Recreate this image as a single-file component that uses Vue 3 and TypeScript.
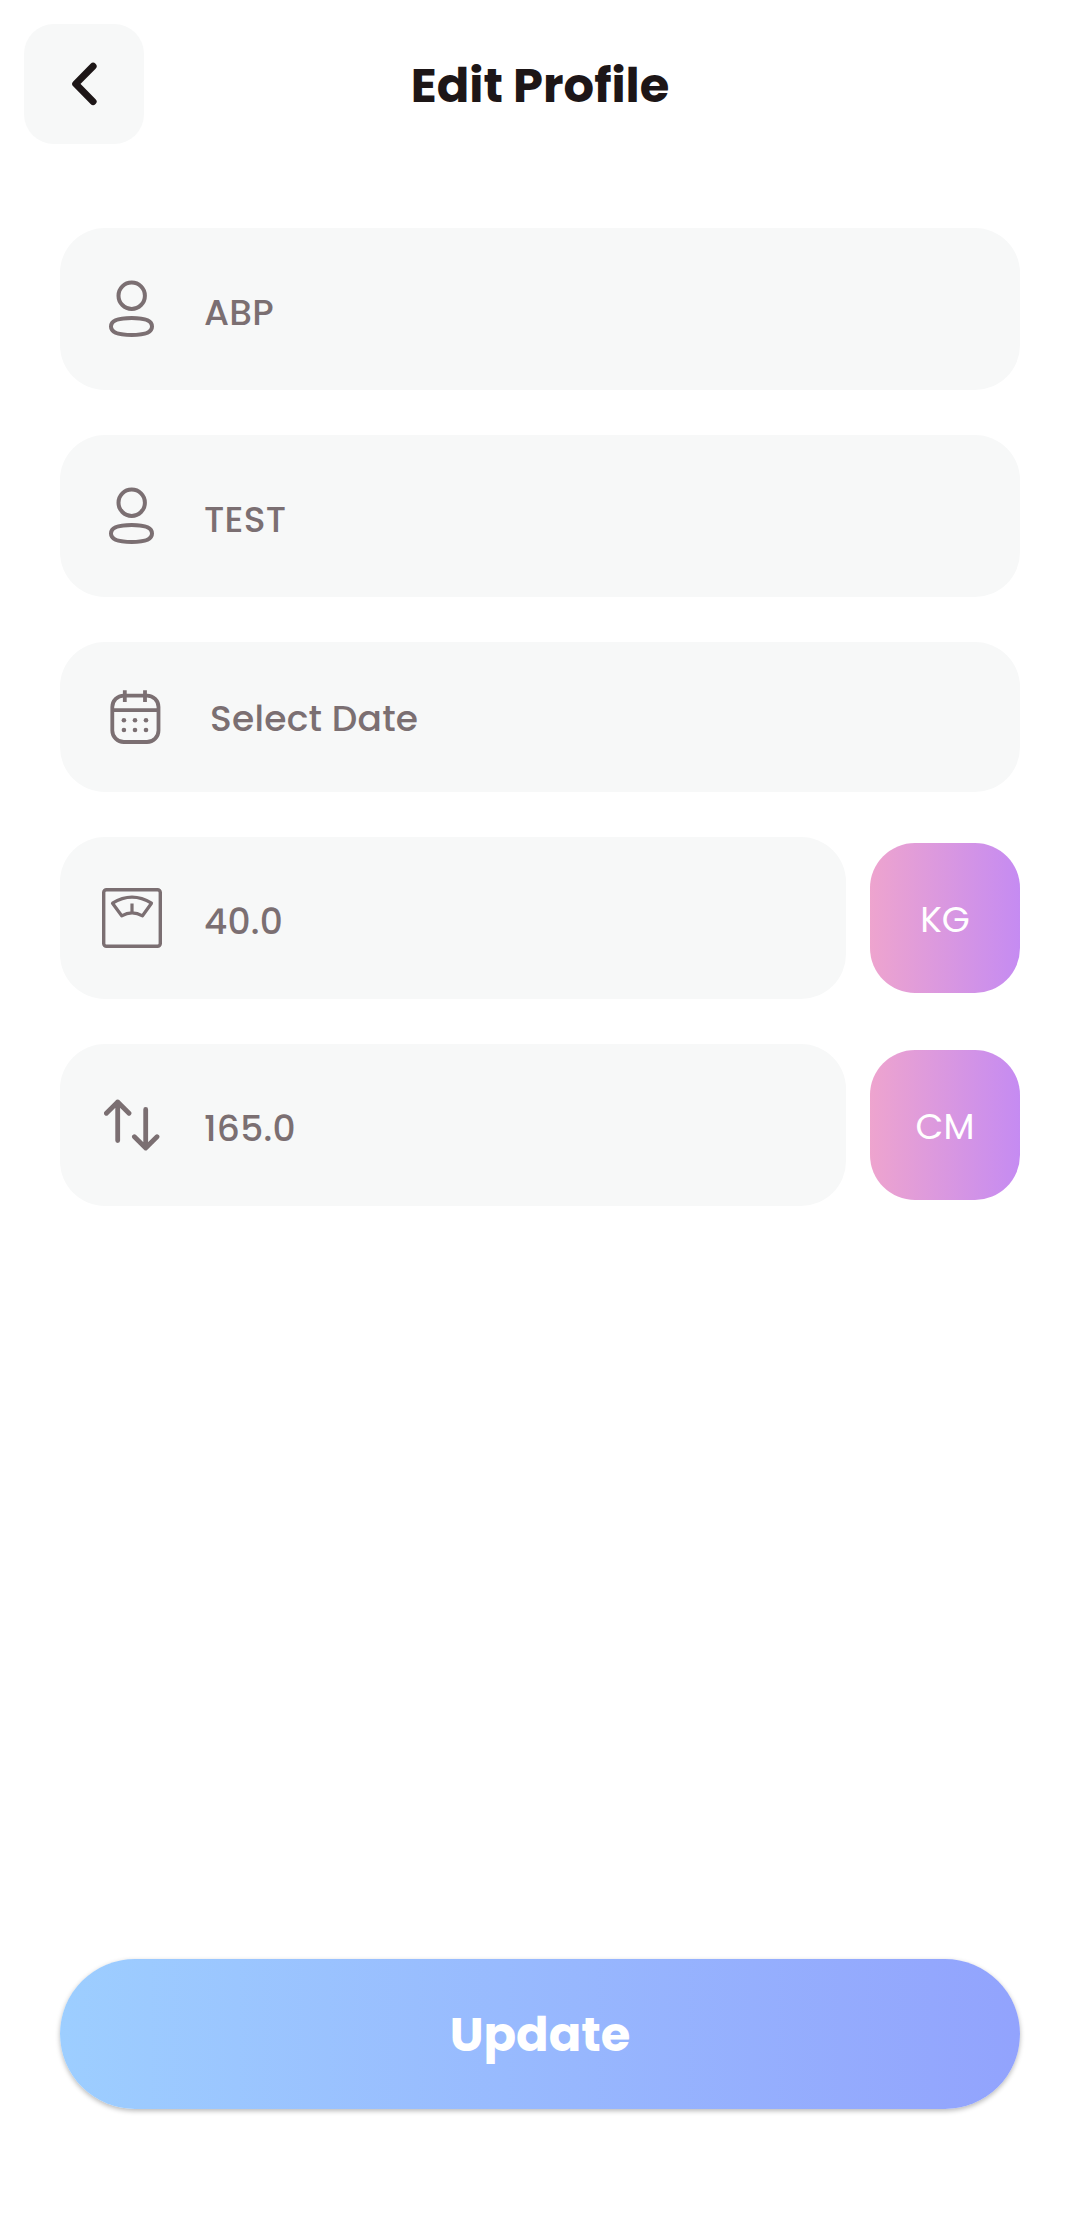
<script setup lang="ts">
type IconName = 'person' | 'calendar' | 'scale' | 'swap'

interface Field {
  id: string
  icon: IconName
  text: string
  unit?: string
}

const fields: Field[] = [
  { id: 'first', icon: 'person', text: 'ABP' },
  { id: 'last', icon: 'person', text: 'TEST' },
  { id: 'date', icon: 'calendar', text: 'Select Date' },
  { id: 'weight', icon: 'scale', text: '40.0', unit: 'KG' },
  { id: 'height', icon: 'swap', text: '165.0', unit: 'CM' },
]
</script>

<template>
  <main class="screen">
    <header class="bar">
      <button class="back" aria-label="Back">
        <svg width="120" height="120" viewBox="0 0 120 120" fill="none">
          <path d="M69.1 42.200 51.700 59.900l17.400 17.700" stroke="#1d1617" stroke-width="7" stroke-linecap="round" stroke-linejoin="round" />
        </svg>
      </button>
      <h1 class="title">Edit Profile</h1>
    </header>

    <form class="form" @submit.prevent>
      <div v-for="f in fields" :key="f.id" class="row">
        <div class="field" :class="f.id">
          <svg class="icon" width="60" height="60" viewBox="0 0 60 60" fill="none" stroke="#7b6f72">
            <g v-if="f.icon === 'person'" stroke-width="4">
              <circle cx="29.700" cy="16.700" r="13.200" />
              <path d="M29.700 39.100C40 39.100 50 40.300 50 47.500S40 56 29.700 56 9 54.700 9 47.500s10.400-8.400 20.700-8.400Z" />
            </g>
            <g v-else-if="f.icon === 'calendar'" stroke-width="3.800">
              <rect x="10.300" y="8.600" width="46.200" height="46.400" rx="11.500" />
              <path d="M10.300 23.200h46.200M22.800 3.300v11.700M43 3.300v11.700" />
              <g fill="#7b6f72" stroke="none">
                <template v-for="y in [33.2, 43]" :key="y">
                  <circle v-for="x in [21.9, 33, 44]" :key="x" :cx="x" :cy="y" r="2.300" />
                </template>
              </g>
            </g>
            <g v-else-if="f.icon === 'scale'" stroke-linejoin="round">
              <rect x="1.700" y="1.700" width="56.600" height="56.600" rx="2.800" stroke-width="3.400" />
              <path d="M10.500 15.200Q30 3 49.500 15.200L40.500 27.800Q30 22 19.700 27.800ZM30 15.500v9" stroke-width="3.200" />
            </g>
            <g v-else stroke-width="4.800" stroke-linecap="round" stroke-linejoin="round">
              <path d="M15.700 45.500V7M4.400 18.200 15.700 7l11.300 11.200M43.700 14.500V53M32.400 41.800 43.700 53l11.300-11.200" />
            </g>
          </svg>
          <span class="value">{{ f.text }}</span>
        </div>
        <button v-if="f.unit" class="unit">{{ f.unit }}</button>
      </div>
    </form>

    <button class="update">Update</button>
  </main>
</template>

<style>
body {
  margin: 0;
  background: #fff;
}
</style>

<style scoped>
.screen {
  box-sizing: border-box;
  width: 1080px;
  height: 2214px;
  display: flex;
  flex-direction: column;
  background: #fff;
  font-family: Poppins, Inter, sans-serif;
  color: #7b6f72;
}
button {
  border: 0;
  padding: 0;
  font-family: inherit;
}
.bar {
  display: grid;
  grid-template-columns: 120px 1fr 120px;
  align-items: center;
  padding: 24px 24px 84px;
}
.back {
  width: 120px;
  height: 120px;
  border-radius: 30px;
  background: #f7f8f8;
}
.back svg {
  display: block;
}
.back svg,
.icon {
  filter: blur(0.5px);
}
.title {
  margin: 0;
  padding-top: 3px;
  text-align: center;
  font-size: 48px;
  font-weight: 700;
  line-height: 67px;
  color: #1d1617;
}
.form {
  display: flex;
  flex-direction: column;
  gap: 45px;
  padding: 0 60px;
}
.row {
  display: flex;
  align-items: center;
  gap: 24px;
}
.field {
  box-sizing: border-box;
  flex: 1;
  height: 162px;
  padding-left: 42px;
  display: flex;
  align-items: center;
  gap: 42px;
  border-radius: 45px;
  background: #f7f8f8;
}
.field.date {
  height: 150px;
  gap: 48px;
}
.value {
  padding-top: 7px;
  font-size: 36px;
  font-weight: 500;
  line-height: 51px;
  letter-spacing: 0.25px;
  white-space: nowrap;
}
.date .value {
  padding-top: 3px;
}
.unit {
  width: 150px;
  height: 150px;
  padding-top: 3px;
  border-radius: 45px;
  background: linear-gradient(90deg, #eea4ce, #c58bf2);
  color: #fff;
  font-size: 36px;
  font-weight: 400;
  line-height: 51px;
}
.update {
  margin: auto 60px 105px;
  height: 150px;
  padding-top: 1px;
  border-radius: 75px;
  background: linear-gradient(90deg, #9dceff, #92a3fd);
  box-shadow: 0 2px 5px rgba(0, 0, 0, 0.28);
  color: #fff;
  font-size: 48px;
  font-weight: 700;
  line-height: 67px;
}
</style>
